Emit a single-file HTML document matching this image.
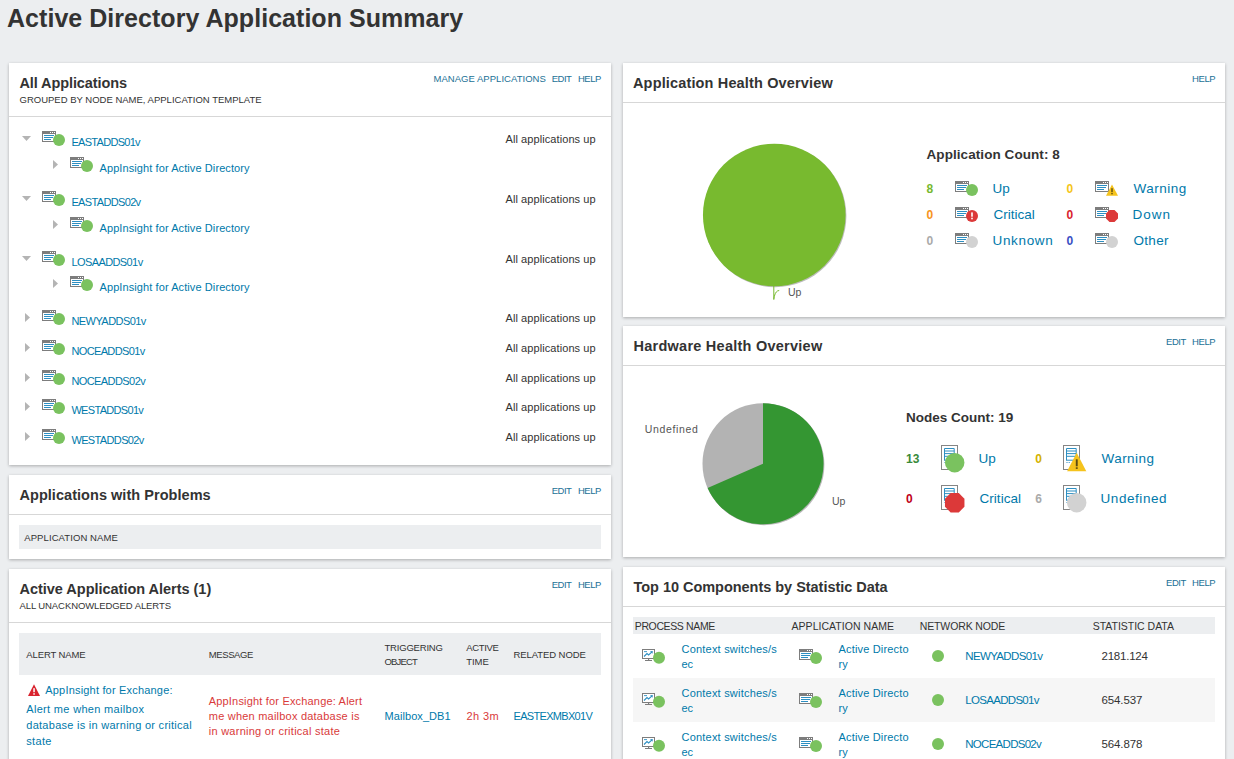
<!DOCTYPE html>
<html lang="en"><head><meta charset="utf-8">
<title>Active Directory Application Summary</title>
<style>
html,body{margin:0;padding:0}
body{width:1234px;height:759px;overflow:hidden;position:relative;background:#eceef0;font-family:"Liberation Sans",Arial,sans-serif;color:#333}
.panel{position:absolute;display:block;background:#fff;box-shadow:0 1px 3px rgba(0,0,0,.28)}
.t{position:absolute;white-space:nowrap;line-height:1;text-decoration:none}
.hr{position:absolute;left:0;right:0;height:1px;background:#d7d7d7}
.bar{position:absolute;background:#eceef0}
.g{position:absolute;overflow:visible}
h1,h2{margin:0;font-size:inherit;font-weight:inherit}

</style></head><body>

<div id="page" style="position:absolute;left:0;top:0;width:1234px;height:759px">

<h1 class="t" style="left:7px;top:4px;font-size:25px;line-height:28px;color:#333;letter-spacing:0.04px;font-weight:bold;">Active Directory Application Summary</h1>
</div>
<section class="panel" id="L1" style="left:9px;top:63px;width:602px;height:402px">
<div class="hr" style="top:53px"></div>
<svg class="g" style="left:13px;top:73px" width="9" height="5" viewBox="0 0 9 5"><polygon points="0,0 9,0 4.5,5" fill="#b4b4b4"/></svg>
<svg class="g" style="left:33px;top:68px" width="24" height="16" viewBox="0 0 24 16"><rect x="0.5" y="0.5" width="13" height="10" fill="#fff" stroke="#7d7d7d"/><rect x="0" y="0" width="14" height="3" fill="#7d7d7d"/><rect x="8" y="1" width="1" height="1" fill="#fff"/><rect x="10" y="1" width="1" height="1" fill="#fff"/><rect x="12" y="1" width="1" height="1" fill="#fff"/><rect x="2" y="4" width="10" height="1" fill="#2d8fc2"/><rect x="2" y="6" width="9" height="1" fill="#2d8fc2"/><rect x="2" y="8" width="7" height="1" fill="#2d8fc2"/><circle cx="17" cy="9" r="6" fill="#7ac25f"/></svg>
<svg class="g" style="left:44px;top:97px" width="5" height="9" viewBox="0 0 5 9"><polygon points="0,0 5,4.5 0,9" fill="#b4b4b4"/></svg>
<svg class="g" style="left:61px;top:94px" width="24" height="16" viewBox="0 0 24 16"><rect x="0.5" y="0.5" width="13" height="10" fill="#fff" stroke="#7d7d7d"/><rect x="0" y="0" width="14" height="3" fill="#7d7d7d"/><rect x="8" y="1" width="1" height="1" fill="#fff"/><rect x="10" y="1" width="1" height="1" fill="#fff"/><rect x="12" y="1" width="1" height="1" fill="#fff"/><rect x="2" y="4" width="10" height="1" fill="#2d8fc2"/><rect x="2" y="6" width="9" height="1" fill="#2d8fc2"/><rect x="2" y="8" width="7" height="1" fill="#2d8fc2"/><circle cx="17" cy="9" r="6" fill="#7ac25f"/></svg>
<svg class="g" style="left:13px;top:133px" width="9" height="5" viewBox="0 0 9 5"><polygon points="0,0 9,0 4.5,5" fill="#b4b4b4"/></svg>
<svg class="g" style="left:33px;top:128px" width="24" height="16" viewBox="0 0 24 16"><rect x="0.5" y="0.5" width="13" height="10" fill="#fff" stroke="#7d7d7d"/><rect x="0" y="0" width="14" height="3" fill="#7d7d7d"/><rect x="8" y="1" width="1" height="1" fill="#fff"/><rect x="10" y="1" width="1" height="1" fill="#fff"/><rect x="12" y="1" width="1" height="1" fill="#fff"/><rect x="2" y="4" width="10" height="1" fill="#2d8fc2"/><rect x="2" y="6" width="9" height="1" fill="#2d8fc2"/><rect x="2" y="8" width="7" height="1" fill="#2d8fc2"/><circle cx="17" cy="9" r="6" fill="#7ac25f"/></svg>
<svg class="g" style="left:44px;top:157px" width="5" height="9" viewBox="0 0 5 9"><polygon points="0,0 5,4.5 0,9" fill="#b4b4b4"/></svg>
<svg class="g" style="left:61px;top:154px" width="24" height="16" viewBox="0 0 24 16"><rect x="0.5" y="0.5" width="13" height="10" fill="#fff" stroke="#7d7d7d"/><rect x="0" y="0" width="14" height="3" fill="#7d7d7d"/><rect x="8" y="1" width="1" height="1" fill="#fff"/><rect x="10" y="1" width="1" height="1" fill="#fff"/><rect x="12" y="1" width="1" height="1" fill="#fff"/><rect x="2" y="4" width="10" height="1" fill="#2d8fc2"/><rect x="2" y="6" width="9" height="1" fill="#2d8fc2"/><rect x="2" y="8" width="7" height="1" fill="#2d8fc2"/><circle cx="17" cy="9" r="6" fill="#7ac25f"/></svg>
<svg class="g" style="left:13px;top:193px" width="9" height="5" viewBox="0 0 9 5"><polygon points="0,0 9,0 4.5,5" fill="#b4b4b4"/></svg>
<svg class="g" style="left:33px;top:188px" width="24" height="16" viewBox="0 0 24 16"><rect x="0.5" y="0.5" width="13" height="10" fill="#fff" stroke="#7d7d7d"/><rect x="0" y="0" width="14" height="3" fill="#7d7d7d"/><rect x="8" y="1" width="1" height="1" fill="#fff"/><rect x="10" y="1" width="1" height="1" fill="#fff"/><rect x="12" y="1" width="1" height="1" fill="#fff"/><rect x="2" y="4" width="10" height="1" fill="#2d8fc2"/><rect x="2" y="6" width="9" height="1" fill="#2d8fc2"/><rect x="2" y="8" width="7" height="1" fill="#2d8fc2"/><circle cx="17" cy="9" r="6" fill="#7ac25f"/></svg>
<svg class="g" style="left:44px;top:216px" width="5" height="9" viewBox="0 0 5 9"><polygon points="0,0 5,4.5 0,9" fill="#b4b4b4"/></svg>
<svg class="g" style="left:61px;top:213px" width="24" height="16" viewBox="0 0 24 16"><rect x="0.5" y="0.5" width="13" height="10" fill="#fff" stroke="#7d7d7d"/><rect x="0" y="0" width="14" height="3" fill="#7d7d7d"/><rect x="8" y="1" width="1" height="1" fill="#fff"/><rect x="10" y="1" width="1" height="1" fill="#fff"/><rect x="12" y="1" width="1" height="1" fill="#fff"/><rect x="2" y="4" width="10" height="1" fill="#2d8fc2"/><rect x="2" y="6" width="9" height="1" fill="#2d8fc2"/><rect x="2" y="8" width="7" height="1" fill="#2d8fc2"/><circle cx="17" cy="9" r="6" fill="#7ac25f"/></svg>
<svg class="g" style="left:16px;top:250px" width="5" height="9" viewBox="0 0 5 9"><polygon points="0,0 5,4.5 0,9" fill="#b4b4b4"/></svg>
<svg class="g" style="left:33px;top:247px" width="24" height="16" viewBox="0 0 24 16"><rect x="0.5" y="0.5" width="13" height="10" fill="#fff" stroke="#7d7d7d"/><rect x="0" y="0" width="14" height="3" fill="#7d7d7d"/><rect x="8" y="1" width="1" height="1" fill="#fff"/><rect x="10" y="1" width="1" height="1" fill="#fff"/><rect x="12" y="1" width="1" height="1" fill="#fff"/><rect x="2" y="4" width="10" height="1" fill="#2d8fc2"/><rect x="2" y="6" width="9" height="1" fill="#2d8fc2"/><rect x="2" y="8" width="7" height="1" fill="#2d8fc2"/><circle cx="17" cy="9" r="6" fill="#7ac25f"/></svg>
<svg class="g" style="left:16px;top:280px" width="5" height="9" viewBox="0 0 5 9"><polygon points="0,0 5,4.5 0,9" fill="#b4b4b4"/></svg>
<svg class="g" style="left:33px;top:277px" width="24" height="16" viewBox="0 0 24 16"><rect x="0.5" y="0.5" width="13" height="10" fill="#fff" stroke="#7d7d7d"/><rect x="0" y="0" width="14" height="3" fill="#7d7d7d"/><rect x="8" y="1" width="1" height="1" fill="#fff"/><rect x="10" y="1" width="1" height="1" fill="#fff"/><rect x="12" y="1" width="1" height="1" fill="#fff"/><rect x="2" y="4" width="10" height="1" fill="#2d8fc2"/><rect x="2" y="6" width="9" height="1" fill="#2d8fc2"/><rect x="2" y="8" width="7" height="1" fill="#2d8fc2"/><circle cx="17" cy="9" r="6" fill="#7ac25f"/></svg>
<svg class="g" style="left:16px;top:310px" width="5" height="9" viewBox="0 0 5 9"><polygon points="0,0 5,4.5 0,9" fill="#b4b4b4"/></svg>
<svg class="g" style="left:33px;top:307px" width="24" height="16" viewBox="0 0 24 16"><rect x="0.5" y="0.5" width="13" height="10" fill="#fff" stroke="#7d7d7d"/><rect x="0" y="0" width="14" height="3" fill="#7d7d7d"/><rect x="8" y="1" width="1" height="1" fill="#fff"/><rect x="10" y="1" width="1" height="1" fill="#fff"/><rect x="12" y="1" width="1" height="1" fill="#fff"/><rect x="2" y="4" width="10" height="1" fill="#2d8fc2"/><rect x="2" y="6" width="9" height="1" fill="#2d8fc2"/><rect x="2" y="8" width="7" height="1" fill="#2d8fc2"/><circle cx="17" cy="9" r="6" fill="#7ac25f"/></svg>
<svg class="g" style="left:16px;top:339px" width="5" height="9" viewBox="0 0 5 9"><polygon points="0,0 5,4.5 0,9" fill="#b4b4b4"/></svg>
<svg class="g" style="left:33px;top:336px" width="24" height="16" viewBox="0 0 24 16"><rect x="0.5" y="0.5" width="13" height="10" fill="#fff" stroke="#7d7d7d"/><rect x="0" y="0" width="14" height="3" fill="#7d7d7d"/><rect x="8" y="1" width="1" height="1" fill="#fff"/><rect x="10" y="1" width="1" height="1" fill="#fff"/><rect x="12" y="1" width="1" height="1" fill="#fff"/><rect x="2" y="4" width="10" height="1" fill="#2d8fc2"/><rect x="2" y="6" width="9" height="1" fill="#2d8fc2"/><rect x="2" y="8" width="7" height="1" fill="#2d8fc2"/><circle cx="17" cy="9" r="6" fill="#7ac25f"/></svg>
<svg class="g" style="left:16px;top:369px" width="5" height="9" viewBox="0 0 5 9"><polygon points="0,0 5,4.5 0,9" fill="#b4b4b4"/></svg>
<svg class="g" style="left:33px;top:366px" width="24" height="16" viewBox="0 0 24 16"><rect x="0.5" y="0.5" width="13" height="10" fill="#fff" stroke="#7d7d7d"/><rect x="0" y="0" width="14" height="3" fill="#7d7d7d"/><rect x="8" y="1" width="1" height="1" fill="#fff"/><rect x="10" y="1" width="1" height="1" fill="#fff"/><rect x="12" y="1" width="1" height="1" fill="#fff"/><rect x="2" y="4" width="10" height="1" fill="#2d8fc2"/><rect x="2" y="6" width="9" height="1" fill="#2d8fc2"/><rect x="2" y="8" width="7" height="1" fill="#2d8fc2"/><circle cx="17" cy="9" r="6" fill="#7ac25f"/></svg>

<h2 class="t" style="left:10.5px;top:12px;font-size:14.5px;line-height:16px;color:#333333;letter-spacing:-0.1px;font-weight:bold;">All Applications</h2>
<span class="t" style="left:10.5px;top:31px;font-size:9.5px;line-height:11px;color:#333333;">GROUPED BY NODE NAME, APPLICATION TEMPLATE</span>
<a class="t" style="left:424.5px;top:10px;font-size:9.5px;line-height:11px;color:#1b7196;letter-spacing:0.03px;">MANAGE APPLICATIONS</a>
<a class="t" style="left:542.75px;top:10px;font-size:9.5px;line-height:11px;color:#1b7196;letter-spacing:-0.53px;">EDIT</a>
<a class="t" style="left:569px;top:10px;font-size:9.5px;line-height:11px;color:#1b7196;letter-spacing:-0.49px;">HELP</a>
<a class="t" style="left:62.4px;top:73px;font-size:11px;line-height:12px;color:#0079aa;letter-spacing:-0.7px;">EASTADDS01v</a>
<span class="t" style="left:496.5px;top:70px;font-size:11px;line-height:12px;color:#333333;letter-spacing:0.08px;">All applications up</span>
<a class="t" style="left:90.5px;top:99px;font-size:11px;line-height:12px;color:#0079aa;letter-spacing:0.09px;">AppInsight for Active Directory</a>
<a class="t" style="left:62.4px;top:133px;font-size:11px;line-height:12px;color:#0079aa;letter-spacing:-0.65px;">EASTADDS02v</a>
<span class="t" style="left:496.5px;top:130px;font-size:11px;line-height:12px;color:#333333;letter-spacing:0.08px;">All applications up</span>
<a class="t" style="left:90.5px;top:159px;font-size:11px;line-height:12px;color:#0079aa;letter-spacing:0.09px;">AppInsight for Active Directory</a>
<a class="t" style="left:62.4px;top:193px;font-size:11px;line-height:12px;color:#0079aa;letter-spacing:-0.59px;">LOSAADDS01v</a>
<span class="t" style="left:496.5px;top:190px;font-size:11px;line-height:12px;color:#333333;letter-spacing:0.08px;">All applications up</span>
<a class="t" style="left:90.5px;top:218px;font-size:11px;line-height:12px;color:#0079aa;letter-spacing:0.09px;">AppInsight for Active Directory</a>
<a class="t" style="left:62.4px;top:252px;font-size:11px;line-height:12px;color:#0079aa;letter-spacing:-0.55px;">NEWYADDS01v</a>
<span class="t" style="left:496.5px;top:249px;font-size:11px;line-height:12px;color:#333333;letter-spacing:0.08px;">All applications up</span>
<a class="t" style="left:62.4px;top:282px;font-size:11px;line-height:12px;color:#0079aa;letter-spacing:-0.63px;">NOCEADDS01v</a>
<span class="t" style="left:496.5px;top:279px;font-size:11px;line-height:12px;color:#333333;letter-spacing:0.08px;">All applications up</span>
<a class="t" style="left:62.4px;top:312px;font-size:11px;line-height:12px;color:#0079aa;letter-spacing:-0.58px;">NOCEADDS02v</a>
<span class="t" style="left:496.5px;top:309px;font-size:11px;line-height:12px;color:#333333;letter-spacing:0.08px;">All applications up</span>
<a class="t" style="left:62.4px;top:341px;font-size:11px;line-height:12px;color:#0079aa;letter-spacing:-0.68px;">WESTADDS01v</a>
<span class="t" style="left:496.5px;top:338px;font-size:11px;line-height:12px;color:#333333;letter-spacing:0.08px;">All applications up</span>
<a class="t" style="left:62.4px;top:371px;font-size:11px;line-height:12px;color:#0079aa;letter-spacing:-0.63px;">WESTADDS02v</a>
<span class="t" style="left:496.5px;top:368px;font-size:11px;line-height:12px;color:#333333;letter-spacing:0.08px;">All applications up</span>
</section>
<section class="panel" id="L2" style="left:9px;top:475px;width:602px;height:84px">
<div class="hr" style="top:39px"></div>
<div class="bar" style="left:10px;top:50px;width:582px;height:24px"></div>

<h2 class="t" style="left:10.5px;top:12px;font-size:14.5px;line-height:16px;color:#333333;letter-spacing:0.04px;font-weight:bold;">Applications with Problems</h2>
<a class="t" style="left:542.75px;top:10px;font-size:9.5px;line-height:11px;color:#1b7196;letter-spacing:-0.53px;">EDIT</a>
<a class="t" style="left:569px;top:10px;font-size:9.5px;line-height:11px;color:#1b7196;letter-spacing:-0.49px;">HELP</a>
<span class="t" style="left:15.25px;top:57px;font-size:9.5px;line-height:11px;color:#333333;letter-spacing:0.09px;">APPLICATION NAME</span>
</section>
<section class="panel" id="L3" style="left:9px;top:569px;width:602px;height:260px">
<div class="hr" style="top:53px"></div>
<div class="bar" style="left:10px;top:64px;width:582px;height:42px"></div>
<svg class="g" style="left:19px;top:115px" width="12" height="12" viewBox="0 0 12 12"><polygon points="6,0.3 12,12 0,12" fill="#d9232e"/><rect x="5.3" y="4.2" width="1.5" height="4" fill="#fff"/><rect x="5.3" y="9.2" width="1.5" height="1.5" fill="#fff"/></svg>

<h2 class="t" style="left:10.5px;top:12px;font-size:14.5px;line-height:16px;color:#333333;letter-spacing:-0.02px;font-weight:bold;">Active Application Alerts (1)</h2>
<span class="t" style="left:10.5px;top:31px;font-size:9.5px;line-height:11px;color:#333333;letter-spacing:-0.09px;">ALL UNACKNOWLEDGED ALERTS</span>
<a class="t" style="left:542.75px;top:10px;font-size:9.5px;line-height:11px;color:#1b7196;letter-spacing:-0.53px;">EDIT</a>
<a class="t" style="left:569px;top:10px;font-size:9.5px;line-height:11px;color:#1b7196;letter-spacing:-0.49px;">HELP</a>
<span class="t" style="left:17.25px;top:80px;font-size:9.5px;line-height:11px;color:#333333;letter-spacing:-0.11px;">ALERT NAME</span>
<span class="t" style="left:199.75px;top:80px;font-size:9.5px;line-height:11px;color:#333333;letter-spacing:-0.4px;">MESSAGE</span>
<span class="t" style="left:375.5px;top:73px;font-size:9.5px;line-height:11px;color:#333333;letter-spacing:-0.2px;">TRIGGERING</span>
<span class="t" style="left:375.5px;top:87px;font-size:9.5px;line-height:11px;color:#333333;letter-spacing:-0.83px;">OBJECT</span>
<span class="t" style="left:457.25px;top:73px;font-size:9.5px;line-height:11px;color:#333333;letter-spacing:-0.35px;">ACTIVE</span>
<span class="t" style="left:457.25px;top:87px;font-size:9.5px;line-height:11px;color:#333333;letter-spacing:-0.04px;">TIME</span>
<span class="t" style="left:504.5px;top:80px;font-size:9.5px;line-height:11px;color:#333333;letter-spacing:-0.08px;">RELATED NODE</span>
<a class="t" style="left:36.25px;top:115px;font-size:11px;line-height:12px;color:#0079aa;letter-spacing:0.19px;">AppInsight for Exchange:</a>
<a class="t" style="left:17.25px;top:134px;font-size:11px;line-height:12px;color:#0079aa;letter-spacing:0.32px;">Alert me when mailbox</a>
<a class="t" style="left:17.25px;top:150px;font-size:11px;line-height:12px;color:#0079aa;letter-spacing:0.27px;">database is in warning or critical</a>
<a class="t" style="left:17.25px;top:166px;font-size:11px;line-height:12px;color:#0079aa;letter-spacing:0.32px;">state</a>
<span class="t" style="left:199.75px;top:126px;font-size:11px;line-height:12px;color:#d93a3a;letter-spacing:0.18px;">AppInsight for Exchange: Alert</span>
<span class="t" style="left:199.75px;top:141px;font-size:11px;line-height:12px;color:#d93a3a;letter-spacing:0.22px;">me when mailbox database is</span>
<span class="t" style="left:199.75px;top:156px;font-size:11px;line-height:12px;color:#d93a3a;letter-spacing:0.26px;">in warning or critical state</span>
<a class="t" style="left:375.5px;top:141px;font-size:11px;line-height:12px;color:#0079aa;letter-spacing:0.07px;">Mailbox_DB1</a>
<span class="t" style="left:457.5px;top:141px;font-size:11px;line-height:12px;color:#d93a3a;letter-spacing:0.4px;">2h 3m</span>
<a class="t" style="left:504.5px;top:141px;font-size:11px;line-height:12px;color:#0079aa;letter-spacing:-0.68px;">EASTEXMBX01V</a>
</section>
<section class="panel" id="R1" style="left:623px;top:63px;width:602px;height:253.5px">
<div class="hr" style="top:39px"></div>
<svg class="g" style="left:77px;top:77px" width="150" height="165" viewBox="0 0 150 165"><circle cx="75.1" cy="75.9" r="71.3" fill="#bdbdbd"/><circle cx="74.25" cy="75" r="71.3" fill="#78ba2f"/><path d="M79.2 150.5 C74.5 150.5 73.8 159.5 73.8 159.5 L73.8 146" fill="none" stroke="#78ba2f" stroke-width="1"/></svg>
<svg class="g" style="left:332px;top:118px" width="24" height="16" viewBox="0 0 24 16"><rect x="0.5" y="0.5" width="13" height="10" fill="#fff" stroke="#7d7d7d"/><rect x="0" y="0" width="14" height="3" fill="#7d7d7d"/><rect x="8" y="1" width="1" height="1" fill="#fff"/><rect x="10" y="1" width="1" height="1" fill="#fff"/><rect x="12" y="1" width="1" height="1" fill="#fff"/><rect x="2" y="4" width="10" height="1" fill="#2d8fc2"/><rect x="2" y="6" width="9" height="1" fill="#2d8fc2"/><rect x="2" y="8" width="7" height="1" fill="#2d8fc2"/><circle cx="17" cy="9" r="6" fill="#7ac25f"/></svg>
<svg class="g" style="left:332px;top:144px" width="24" height="16" viewBox="0 0 24 16"><rect x="0.5" y="0.5" width="13" height="10" fill="#fff" stroke="#7d7d7d"/><rect x="0" y="0" width="14" height="3" fill="#7d7d7d"/><rect x="8" y="1" width="1" height="1" fill="#fff"/><rect x="10" y="1" width="1" height="1" fill="#fff"/><rect x="12" y="1" width="1" height="1" fill="#fff"/><rect x="2" y="4" width="10" height="1" fill="#2d8fc2"/><rect x="2" y="6" width="9" height="1" fill="#2d8fc2"/><rect x="2" y="8" width="7" height="1" fill="#2d8fc2"/><circle cx="17" cy="9" r="6" fill="#dc3939"/><rect x="16.2" y="5.4" width="1.6" height="4.3" fill="#fff"/><rect x="16.2" y="10.7" width="1.6" height="1.6" fill="#fff"/></svg>
<svg class="g" style="left:332px;top:170px" width="24" height="16" viewBox="0 0 24 16"><rect x="0.5" y="0.5" width="13" height="10" fill="#fff" stroke="#7d7d7d"/><rect x="0" y="0" width="14" height="3" fill="#7d7d7d"/><rect x="8" y="1" width="1" height="1" fill="#fff"/><rect x="10" y="1" width="1" height="1" fill="#fff"/><rect x="12" y="1" width="1" height="1" fill="#fff"/><rect x="2" y="4" width="10" height="1" fill="#2d8fc2"/><rect x="2" y="6" width="9" height="1" fill="#2d8fc2"/><rect x="2" y="8" width="7" height="1" fill="#2d8fc2"/><circle cx="17" cy="9" r="6" fill="#d2d2d2"/></svg>
<svg class="g" style="left:472px;top:118px" width="24" height="16" viewBox="0 0 24 16"><rect x="0.5" y="0.5" width="13" height="10" fill="#fff" stroke="#7d7d7d"/><rect x="0" y="0" width="14" height="3" fill="#7d7d7d"/><rect x="8" y="1" width="1" height="1" fill="#fff"/><rect x="10" y="1" width="1" height="1" fill="#fff"/><rect x="12" y="1" width="1" height="1" fill="#fff"/><rect x="2" y="4" width="10" height="1" fill="#2d8fc2"/><rect x="2" y="6" width="9" height="1" fill="#2d8fc2"/><rect x="2" y="8" width="7" height="1" fill="#2d8fc2"/><polygon points="17,3.5 23,14.8 11,14.8" fill="#f5c31d"/><rect x="16.3" y="7.2" width="1.4" height="4" fill="#5b4a12"/><rect x="16.3" y="12" width="1.4" height="1.3" fill="#5b4a12"/></svg>
<svg class="g" style="left:472px;top:144px" width="24" height="16" viewBox="0 0 24 16"><rect x="0.5" y="0.5" width="13" height="10" fill="#fff" stroke="#7d7d7d"/><rect x="0" y="0" width="14" height="3" fill="#7d7d7d"/><rect x="8" y="1" width="1" height="1" fill="#fff"/><rect x="10" y="1" width="1" height="1" fill="#fff"/><rect x="12" y="1" width="1" height="1" fill="#fff"/><rect x="2" y="4" width="10" height="1" fill="#2d8fc2"/><rect x="2" y="6" width="9" height="1" fill="#2d8fc2"/><rect x="2" y="8" width="7" height="1" fill="#2d8fc2"/><polygon points="23,11.49 19.49,15 14.51,15 11,11.49 11,6.51 14.51,3 19.49,3 23,6.51" fill="#dc3939"/></svg>
<svg class="g" style="left:472px;top:170px" width="24" height="16" viewBox="0 0 24 16"><rect x="0.5" y="0.5" width="13" height="10" fill="#fff" stroke="#7d7d7d"/><rect x="0" y="0" width="14" height="3" fill="#7d7d7d"/><rect x="8" y="1" width="1" height="1" fill="#fff"/><rect x="10" y="1" width="1" height="1" fill="#fff"/><rect x="12" y="1" width="1" height="1" fill="#fff"/><rect x="2" y="4" width="10" height="1" fill="#2d8fc2"/><rect x="2" y="6" width="9" height="1" fill="#2d8fc2"/><rect x="2" y="8" width="7" height="1" fill="#2d8fc2"/><circle cx="17" cy="9" r="6" fill="#d2d2d2"/></svg>

<h2 class="t" style="left:10px;top:12px;font-size:14.5px;line-height:16px;color:#333333;letter-spacing:0.15px;font-weight:bold;">Application Health Overview</h2>
<a class="t" style="left:569px;top:10px;font-size:9.5px;line-height:11px;color:#1b7196;letter-spacing:-0.41px;">HELP</a>
<span class="t" style="left:165px;top:223px;font-size:10.5px;line-height:12px;color:#555;">Up</span>
<span class="t" style="left:303.5px;top:84px;font-size:13.5px;line-height:15px;color:#333333;letter-spacing:0.07px;font-weight:bold;">Application Count: 8</span>
<span class="t" style="left:303.5px;top:119px;font-size:12px;line-height:14px;color:#77b92e;font-weight:bold;">8</span>
<a class="t" style="left:369.5px;top:118px;font-size:13.5px;line-height:15px;color:#0079aa;">Up</a>
<span class="t" style="left:303.5px;top:145px;font-size:12px;line-height:14px;color:#f79420;font-weight:bold;">0</span>
<a class="t" style="left:370.5px;top:144px;font-size:13.5px;line-height:15px;color:#0079aa;">Critical</a>
<span class="t" style="left:303.5px;top:171px;font-size:12px;line-height:14px;color:#aaaaaa;font-weight:bold;">0</span>
<a class="t" style="left:369.5px;top:170px;font-size:13.5px;line-height:15px;color:#0079aa;letter-spacing:0.66px;">Unknown</a>
<span class="t" style="left:443.5px;top:119px;font-size:12px;line-height:14px;color:#f5c518;font-weight:bold;">0</span>
<a class="t" style="left:510.5px;top:118px;font-size:13.5px;line-height:15px;color:#0079aa;letter-spacing:0.5px;">Warning</a>
<span class="t" style="left:443.5px;top:145px;font-size:12px;line-height:14px;color:#d9232e;font-weight:bold;">0</span>
<a class="t" style="left:509.5px;top:144px;font-size:13.5px;line-height:15px;color:#0079aa;letter-spacing:1px;">Down</a>
<span class="t" style="left:443.5px;top:171px;font-size:12px;line-height:14px;color:#3a4fc4;font-weight:bold;">0</span>
<a class="t" style="left:510.5px;top:170px;font-size:13.5px;line-height:15px;color:#0079aa;letter-spacing:0.31px;">Other</a>
</section>
<section class="panel" id="R2" style="left:623px;top:326px;width:602px;height:231px">
<div class="hr" style="top:39px"></div>
<svg class="g" style="left:77px;top:74px" width="130" height="130" viewBox="0 0 130 130"><circle cx="63.9" cy="64.65" r="60.5" fill="#b9b9b9"/><circle cx="63" cy="63.75" r="60.5" fill="#b3b3b3"/><path d="M63 63.75 L63 3.25 A60.5 60.5 0 1 1 7.6 88.05 Z" fill="#349632"/></svg>
<svg class="g" style="left:318px;top:119px" width="32" height="30" viewBox="0 0 32 30"><rect x="0.5" y="0.5" width="16" height="24" fill="#fff" stroke="#858585" stroke-width="1"/><path d="M3.5 3.5 H13.2 V15.5 M3.5 3.5 V15.6 M3.5 6 H13.2 M3.5 8.6 H13.2 M3.5 11.3 H13.2 M3.5 15.2 H13.2" fill="none" stroke="#2d8fc2" stroke-width="1"/><rect x="3.5" y="17" width="1" height="1" fill="#2d8fc2"/><rect x="5.7" y="17" width="1" height="1" fill="#2d8fc2"/><circle cx="13.7" cy="17.7" r="9.75" fill="#7ac25f"/></svg>
<svg class="g" style="left:440px;top:119px" width="32" height="30" viewBox="0 0 32 30"><rect x="0.5" y="0.5" width="16" height="24" fill="#fff" stroke="#858585" stroke-width="1"/><path d="M3.5 3.5 H13.2 V15.5 M3.5 3.5 V15.6 M3.5 6 H13.2 M3.5 8.6 H13.2 M3.5 11.3 H13.2 M3.5 15.2 H13.2" fill="none" stroke="#2d8fc2" stroke-width="1"/><rect x="3.5" y="17" width="1" height="1" fill="#2d8fc2"/><rect x="5.7" y="17" width="1" height="1" fill="#2d8fc2"/><polygon points="13.7,7.8 23.3,26.2 4.1,26.2" fill="#f5c31d"/><rect x="12.8" y="14.3" width="1.9" height="7" fill="#5b4a12"/><rect x="12.8" y="22.3" width="1.9" height="1.6" fill="#5b4a12"/></svg>
<svg class="g" style="left:318px;top:159px" width="32" height="30" viewBox="0 0 32 30"><rect x="0.5" y="0.5" width="16" height="24" fill="#fff" stroke="#858585" stroke-width="1"/><path d="M3.5 3.5 H13.2 V15.5 M3.5 3.5 V15.6 M3.5 6 H13.2 M3.5 8.6 H13.2 M3.5 11.3 H13.2 M3.5 15.2 H13.2" fill="none" stroke="#2d8fc2" stroke-width="1"/><rect x="3.5" y="17" width="1" height="1" fill="#2d8fc2"/><rect x="5.7" y="17" width="1" height="1" fill="#2d8fc2"/><polygon points="23.45,21.74 17.74,27.45 9.66,27.45 3.95,21.74 3.95,13.66 9.66,7.95 17.74,7.95 23.45,13.66" fill="#dc3939"/></svg>
<svg class="g" style="left:440px;top:159px" width="32" height="30" viewBox="0 0 32 30"><rect x="0.5" y="0.5" width="16" height="24" fill="#fff" stroke="#858585" stroke-width="1"/><path d="M3.5 3.5 H13.2 V15.5 M3.5 3.5 V15.6 M3.5 6 H13.2 M3.5 8.6 H13.2 M3.5 11.3 H13.2 M3.5 15.2 H13.2" fill="none" stroke="#2d8fc2" stroke-width="1"/><rect x="3.5" y="17" width="1" height="1" fill="#2d8fc2"/><rect x="5.7" y="17" width="1" height="1" fill="#2d8fc2"/><circle cx="13.7" cy="17.7" r="9.75" fill="#d2d2d2"/></svg>

<h2 class="t" style="left:10.5px;top:12px;font-size:14.5px;line-height:16px;color:#333333;letter-spacing:0.25px;font-weight:bold;">Hardware Health Overview</h2>
<a class="t" style="left:543px;top:10px;font-size:9.5px;line-height:11px;color:#1b7196;letter-spacing:-0.45px;">EDIT</a>
<a class="t" style="left:569px;top:10px;font-size:9.5px;line-height:11px;color:#1b7196;letter-spacing:-0.41px;">HELP</a>
<span class="t" style="left:21.75px;top:97px;font-size:10.5px;line-height:12px;color:#555;letter-spacing:0.65px;">Undefined</span>
<span class="t" style="left:209px;top:169px;font-size:10.5px;line-height:12px;color:#555;">Up</span>
<span class="t" style="left:283px;top:84px;font-size:13.5px;line-height:15px;color:#333333;font-weight:bold;">Nodes Count: 19</span>
<span class="t" style="left:283px;top:126px;font-size:12px;line-height:14px;color:#3a8a3a;font-weight:bold;">13</span>
<a class="t" style="left:355.5px;top:125px;font-size:13.5px;line-height:15px;color:#0079aa;">Up</a>
<span class="t" style="left:412.25px;top:126px;font-size:12px;line-height:14px;color:#d4b200;font-weight:bold;">0</span>
<a class="t" style="left:478.5px;top:125px;font-size:13.5px;line-height:15px;color:#0079aa;letter-spacing:0.46px;">Warning</a>
<span class="t" style="left:283px;top:166px;font-size:12px;line-height:14px;color:#c00018;font-weight:bold;">0</span>
<a class="t" style="left:356.5px;top:165px;font-size:13.5px;line-height:15px;color:#0079aa;letter-spacing:0.04px;">Critical</a>
<span class="t" style="left:412.25px;top:166px;font-size:12px;line-height:14px;color:#aaaaaa;font-weight:bold;">6</span>
<a class="t" style="left:477.5px;top:165px;font-size:13.5px;line-height:15px;color:#0079aa;letter-spacing:0.56px;">Undefined</a>
</section>
<section class="panel" id="R3" style="left:623px;top:567px;width:602px;height:260px">
<div class="hr" style="top:39px"></div>
<div class="bar" style="left:10px;top:50px;width:582px;height:16.75px"></div>
<div class="bar" style="left:10px;top:111px;width:582px;height:44px;background:#f6f6f6"></div>
<svg class="g" style="left:19px;top:82px" width="24" height="16" viewBox="0 0 24 16"><rect x="0.5" y="0.5" width="12" height="9" fill="#fff" stroke="#7d7d7d"/><rect x="6" y="10" width="1.2" height="1.2" fill="#7d7d7d"/><rect x="3" y="11" width="7" height="1" fill="#7d7d7d"/><path d="M2 7.5 L5 4.6 L6.6 6 L10 2.8" fill="none" stroke="#2d8fc2" stroke-width="1.1"/><path d="M8 2.2 L10.8 2 L10.5 4.8 Z" fill="#2d8fc2"/><rect x="2" y="2.2" width="3" height="0.9" fill="#2d8fc2"/><circle cx="17" cy="8.8" r="6" fill="#7ac25f"/></svg>
<svg class="g" style="left:176px;top:82px" width="24" height="16" viewBox="0 0 24 16"><rect x="0.5" y="0.5" width="13" height="10" fill="#fff" stroke="#7d7d7d"/><rect x="0" y="0" width="14" height="3" fill="#7d7d7d"/><rect x="8" y="1" width="1" height="1" fill="#fff"/><rect x="10" y="1" width="1" height="1" fill="#fff"/><rect x="12" y="1" width="1" height="1" fill="#fff"/><rect x="2" y="4" width="10" height="1" fill="#2d8fc2"/><rect x="2" y="6" width="9" height="1" fill="#2d8fc2"/><rect x="2" y="8" width="7" height="1" fill="#2d8fc2"/><circle cx="17" cy="9" r="6" fill="#7ac25f"/></svg>
<svg class="g" style="left:309px;top:83.25px" width="12" height="12" viewBox="0 0 12 12"><circle cx="6" cy="6" r="6" fill="#7ac25f"/></svg>
<svg class="g" style="left:19px;top:126px" width="24" height="16" viewBox="0 0 24 16"><rect x="0.5" y="0.5" width="12" height="9" fill="#fff" stroke="#7d7d7d"/><rect x="6" y="10" width="1.2" height="1.2" fill="#7d7d7d"/><rect x="3" y="11" width="7" height="1" fill="#7d7d7d"/><path d="M2 7.5 L5 4.6 L6.6 6 L10 2.8" fill="none" stroke="#2d8fc2" stroke-width="1.1"/><path d="M8 2.2 L10.8 2 L10.5 4.8 Z" fill="#2d8fc2"/><rect x="2" y="2.2" width="3" height="0.9" fill="#2d8fc2"/><circle cx="17" cy="8.8" r="6" fill="#7ac25f"/></svg>
<svg class="g" style="left:176px;top:126px" width="24" height="16" viewBox="0 0 24 16"><rect x="0.5" y="0.5" width="13" height="10" fill="#fff" stroke="#7d7d7d"/><rect x="0" y="0" width="14" height="3" fill="#7d7d7d"/><rect x="8" y="1" width="1" height="1" fill="#fff"/><rect x="10" y="1" width="1" height="1" fill="#fff"/><rect x="12" y="1" width="1" height="1" fill="#fff"/><rect x="2" y="4" width="10" height="1" fill="#2d8fc2"/><rect x="2" y="6" width="9" height="1" fill="#2d8fc2"/><rect x="2" y="8" width="7" height="1" fill="#2d8fc2"/><circle cx="17" cy="9" r="6" fill="#7ac25f"/></svg>
<svg class="g" style="left:309px;top:127.25px" width="12" height="12" viewBox="0 0 12 12"><circle cx="6" cy="6" r="6" fill="#7ac25f"/></svg>
<svg class="g" style="left:19px;top:170px" width="24" height="16" viewBox="0 0 24 16"><rect x="0.5" y="0.5" width="12" height="9" fill="#fff" stroke="#7d7d7d"/><rect x="6" y="10" width="1.2" height="1.2" fill="#7d7d7d"/><rect x="3" y="11" width="7" height="1" fill="#7d7d7d"/><path d="M2 7.5 L5 4.6 L6.6 6 L10 2.8" fill="none" stroke="#2d8fc2" stroke-width="1.1"/><path d="M8 2.2 L10.8 2 L10.5 4.8 Z" fill="#2d8fc2"/><rect x="2" y="2.2" width="3" height="0.9" fill="#2d8fc2"/><circle cx="17" cy="8.8" r="6" fill="#7ac25f"/></svg>
<svg class="g" style="left:176px;top:170px" width="24" height="16" viewBox="0 0 24 16"><rect x="0.5" y="0.5" width="13" height="10" fill="#fff" stroke="#7d7d7d"/><rect x="0" y="0" width="14" height="3" fill="#7d7d7d"/><rect x="8" y="1" width="1" height="1" fill="#fff"/><rect x="10" y="1" width="1" height="1" fill="#fff"/><rect x="12" y="1" width="1" height="1" fill="#fff"/><rect x="2" y="4" width="10" height="1" fill="#2d8fc2"/><rect x="2" y="6" width="9" height="1" fill="#2d8fc2"/><rect x="2" y="8" width="7" height="1" fill="#2d8fc2"/><circle cx="17" cy="9" r="6" fill="#7ac25f"/></svg>
<svg class="g" style="left:309px;top:171.25px" width="12" height="12" viewBox="0 0 12 12"><circle cx="6" cy="6" r="6" fill="#7ac25f"/></svg>

<h2 class="t" style="left:10.5px;top:12px;font-size:14.5px;line-height:16px;color:#333333;letter-spacing:-0.03px;font-weight:bold;">Top 10 Components by Statistic Data</h2>
<a class="t" style="left:543px;top:10px;font-size:9.5px;line-height:11px;color:#1b7196;letter-spacing:-0.45px;">EDIT</a>
<a class="t" style="left:569px;top:10px;font-size:9.5px;line-height:11px;color:#1b7196;letter-spacing:-0.41px;">HELP</a>
<span class="t" style="left:11.75px;top:53px;font-size:10.5px;line-height:12px;color:#333333;letter-spacing:-0.37px;">PROCESS NAME</span>
<span class="t" style="left:168.5px;top:53px;font-size:10.5px;line-height:12px;color:#333333;letter-spacing:0.04px;">APPLICATION NAME</span>
<span class="t" style="left:296.75px;top:53px;font-size:10.5px;line-height:12px;color:#333333;letter-spacing:-0.13px;">NETWORK NODE</span>
<span class="t" style="left:469.75px;top:53px;font-size:10.5px;line-height:12px;color:#333333;letter-spacing:-0.02px;">STATISTIC DATA</span>
<a class="t" style="left:58.5px;top:76px;font-size:11px;line-height:12px;color:#0079aa;letter-spacing:0.21px;">Context switches/s</a>
<a class="t" style="left:58.5px;top:91px;font-size:11px;line-height:12px;color:#0079aa;">ec</a>
<a class="t" style="left:215.5px;top:76px;font-size:11px;line-height:12px;color:#0079aa;letter-spacing:0.17px;">Active Directo</a>
<a class="t" style="left:215.5px;top:91px;font-size:11px;line-height:12px;color:#0079aa;">ry</a>
<a class="t" style="left:342.25px;top:83px;font-size:11.5px;line-height:12px;color:#0079aa;letter-spacing:-0.64px;">NEWYADDS01v</a>
<span class="t" style="left:478.5px;top:83px;font-size:11.5px;line-height:12px;color:#333333;letter-spacing:-0.22px;">2181.124</span>
<a class="t" style="left:58.5px;top:120px;font-size:11px;line-height:12px;color:#0079aa;letter-spacing:0.21px;">Context switches/s</a>
<a class="t" style="left:58.5px;top:135px;font-size:11px;line-height:12px;color:#0079aa;">ec</a>
<a class="t" style="left:215.5px;top:120px;font-size:11px;line-height:12px;color:#0079aa;letter-spacing:0.17px;">Active Directo</a>
<a class="t" style="left:215.5px;top:135px;font-size:11px;line-height:12px;color:#0079aa;">ry</a>
<a class="t" style="left:342.25px;top:127px;font-size:11.5px;line-height:12px;color:#0079aa;letter-spacing:-0.69px;">LOSAADDS01v</a>
<span class="t" style="left:478.5px;top:127px;font-size:11.5px;line-height:12px;color:#333333;letter-spacing:-0.11px;">654.537</span>
<a class="t" style="left:58.5px;top:164px;font-size:11px;line-height:12px;color:#0079aa;letter-spacing:0.21px;">Context switches/s</a>
<a class="t" style="left:58.5px;top:179px;font-size:11px;line-height:12px;color:#0079aa;">ec</a>
<a class="t" style="left:215.5px;top:164px;font-size:11px;line-height:12px;color:#0079aa;letter-spacing:0.17px;">Active Directo</a>
<a class="t" style="left:215.5px;top:179px;font-size:11px;line-height:12px;color:#0079aa;">ry</a>
<a class="t" style="left:342.25px;top:171px;font-size:11.5px;line-height:12px;color:#0079aa;letter-spacing:-0.72px;">NOCEADDS02v</a>
<span class="t" style="left:478.5px;top:171px;font-size:11.5px;line-height:12px;color:#333333;letter-spacing:-0.11px;">564.878</span>
</section>
</body></html>
